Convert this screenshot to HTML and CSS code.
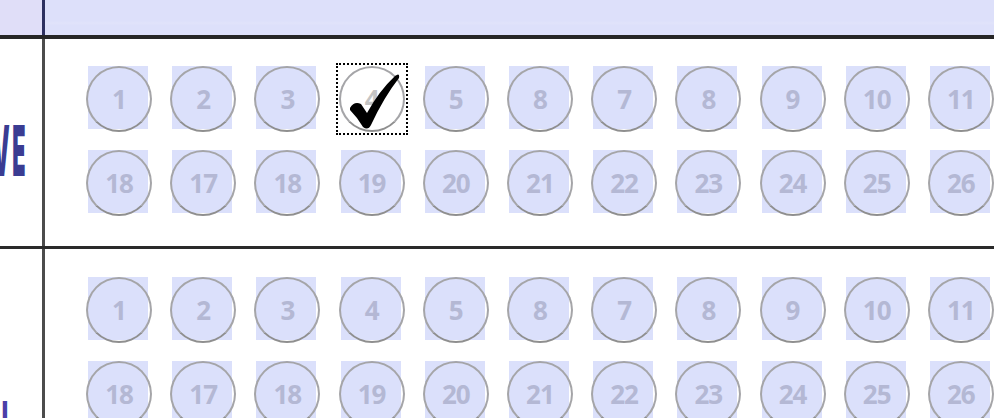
FILE: index.html
```html
<!DOCTYPE html>
<html lang="en">

<head>
    <meta charset="UTF-8">
    <meta name="viewport" content="width=device-width, initial-scale=1.0">
    <title>Answer Sheet</title>
    <link rel="stylesheet" href="styles.css">
</head>

<body>
    <div class="sheet">
        <div class="band">
            <div class="label"></div>
            <div class="band-fill"></div>
        </div>

        <div class="section first">
            <div class="label"><span class="label-text">VE</span></div>
            <div class="bubbles">
                <div class="bubble"><span>1</span></div>
                <div class="bubble"><span>2</span></div>
                <div class="bubble"><span>3</span></div>
                <div class="bubble marked">
                    <span>4</span>
                    <svg class="check" viewBox="0 0 60 60" width="60" height="60">
                        <path d="M5 38 Q9 31 16 34 L22 43 Q34 21 50 6 Q55 2 54 8 Q39 27 26 55 Q23 61 18 57 Q12 47 5 40 Z" />
                    </svg>
                </div>
                <div class="bubble"><span>5</span></div>
                <div class="bubble"><span>8</span></div>
                <div class="bubble"><span>7</span></div>
                <div class="bubble"><span>8</span></div>
                <div class="bubble"><span>9</span></div>
                <div class="bubble"><span>10</span></div>
                <div class="bubble"><span>11</span></div>

                <div class="bubble"><span>18</span></div>
                <div class="bubble"><span>17</span></div>
                <div class="bubble"><span>18</span></div>
                <div class="bubble"><span>19</span></div>
                <div class="bubble"><span>20</span></div>
                <div class="bubble"><span>21</span></div>
                <div class="bubble"><span>22</span></div>
                <div class="bubble"><span>23</span></div>
                <div class="bubble"><span>24</span></div>
                <div class="bubble"><span>25</span></div>
                <div class="bubble"><span>26</span></div>
            </div>
        </div>

        <div class="section second">
            <div class="label"><span class="label-text">I</span></div>
            <div class="bubbles">
                <div class="bubble"><span>1</span></div>
                <div class="bubble"><span>2</span></div>
                <div class="bubble"><span>3</span></div>
                <div class="bubble"><span>4</span></div>
                <div class="bubble"><span>5</span></div>
                <div class="bubble"><span>8</span></div>
                <div class="bubble"><span>7</span></div>
                <div class="bubble"><span>8</span></div>
                <div class="bubble"><span>9</span></div>
                <div class="bubble"><span>10</span></div>
                <div class="bubble"><span>11</span></div>

                <div class="bubble"><span>18</span></div>
                <div class="bubble"><span>17</span></div>
                <div class="bubble"><span>18</span></div>
                <div class="bubble"><span>19</span></div>
                <div class="bubble"><span>20</span></div>
                <div class="bubble"><span>21</span></div>
                <div class="bubble"><span>22</span></div>
                <div class="bubble"><span>23</span></div>
                <div class="bubble"><span>24</span></div>
                <div class="bubble"><span>25</span></div>
                <div class="bubble"><span>26</span></div>
            </div>
        </div>
    </div>
</body>

</html>
```

FILE: styles.css
```css
body {
    margin: 0;
    background-color: #ffffff;
    font-family: 'Open Sans', 'DejaVu Sans', sans-serif;
    overflow: hidden;
}

.sheet {
    width: 994px;
    height: 418px;
    overflow: hidden;
    display: flex;
    flex-direction: column;
}

.band {
    display: flex;
    height: 35px;
    flex-shrink: 0;
    border-bottom: 4px solid #262626;
    background: linear-gradient(#dde0fa 0, #dde0fa 60%, #e1e3fa 66%, #dde0fa 72%, #dde0fa 100%);
}

.band .label {
    background-color: #e0def8;
    border-right-color: #2d3060;
}

.band-fill {
    flex: 1;
}

.section {
    display: flex;
    flex-shrink: 0;
}

.section.first {
    height: 207px;
    border-bottom: 3px solid #2a2a2a;
}

.section.second {
    flex: 1;
}

.label {
    width: 42px;
    flex-shrink: 0;
    border-right: 3px solid #4c4c4c;
    overflow: hidden;
    position: relative;
}

.label-text {
    display: flex;
    justify-content: flex-end;
    font-family: 'Inter', 'Liberation Sans', sans-serif;
    font-weight: 900;
    font-size: 70px;
    line-height: 70px;
    color: #3a3c92;
    transform: scaleX(0.31);
    transform-origin: 100% 0;
    white-space: nowrap;
}

.first .label-text {
    width: 90px;
    margin: 77px 0 0 -62px;
    letter-spacing: 8px;
}

.second .label-text {
    width: 30px;
    margin: 143px 0 0 -22px;
    color: #4b3fa8;
}

.bubbles {
    display: grid;
    grid-template-columns: repeat(11, 66px);
    grid-auto-rows: 66px;
    column-gap: 18.2px;
    row-gap: 18px;
    padding: 27px 0 0 41px;
}

.second .bubbles {
    padding-top: 28px;
}

.bubble {
    position: relative;
    width: 66px;
    height: 66px;
    display: flex;
    align-items: center;
    justify-content: center;
}

.bubble::before {
    content: "";
    position: absolute;
    left: 2px;
    top: 0;
    width: 60px;
    height: 63px;
    background-color: #dbe0fb;
}

.bubble::after {
    content: "";
    position: absolute;
    inset: 0;
    border: 2px solid #a5a5a8;
    border-bottom-color: #8f8f8f;
    border-radius: 50%;
}

.bubble span {
    position: relative;
    z-index: 1;
    font-size: 26px;
    font-weight: 700;
    color: #b4b8d4;
    letter-spacing: -1px;
}

.bubble.marked {
    outline: 2px dotted #000000;
    outline-offset: 1px;
}

.bubble.marked::before {
    display: none;
}

.bubble.marked span {
    color: #c4c4c4;
}

.check {
    position: absolute;
    left: 6px;
    top: 4px;
    z-index: 2;
    fill: #000000;
}
```
